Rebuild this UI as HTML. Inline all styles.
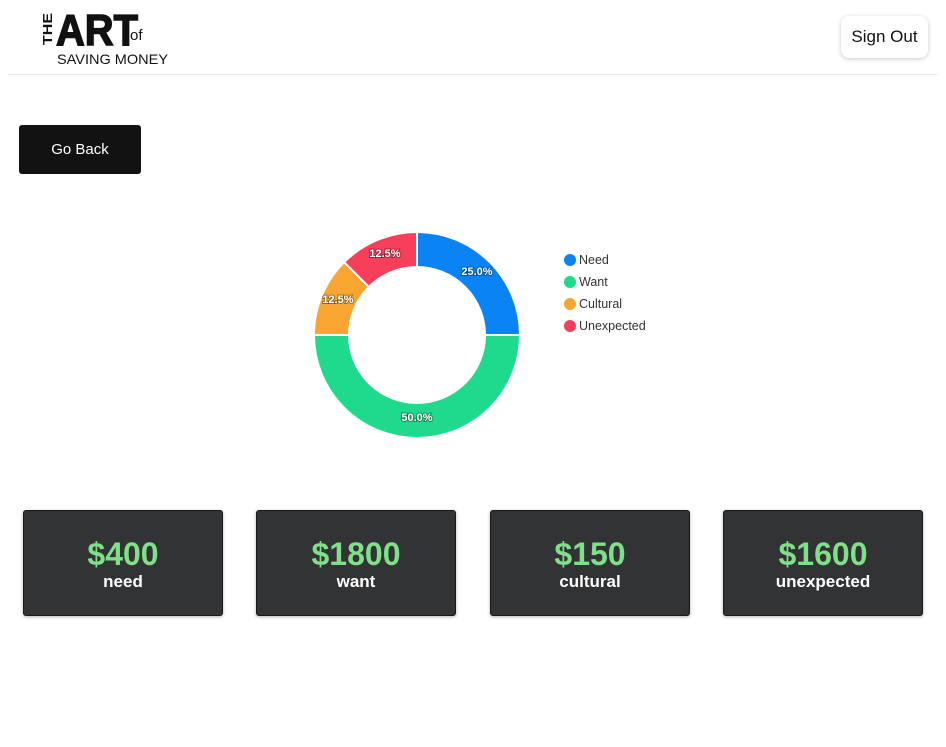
<!DOCTYPE html>
<html><head><meta charset="utf-8"><style>
*{margin:0;padding:0;box-sizing:border-box}
body{width:946px;height:747px;background:#fff;font-family:"Liberation Sans",Arial,sans-serif;position:relative;overflow:hidden}
.hdr{position:absolute;left:8px;top:74px;width:930px;height:1px;background:#eee}
.logo{position:absolute;left:0;top:0}
.so{position:absolute;left:841px;top:16px;width:87px;height:42px;border-radius:8px;background:#fff;box-shadow:0 1px 5px rgba(0,0,0,.22);font-size:17px;line-height:42px;text-align:center;color:#111}
.gb{position:absolute;left:19px;top:125px;width:122px;height:49px;border-radius:3px;background:#121212;color:#fff;font-size:15px;line-height:49px;text-align:center}
.card{position:absolute;top:510px;width:200px;height:106px;background:#323335;border:1px solid #1a1a1a;border-radius:3px;box-shadow:0 1px 3px rgba(0,0,0,.3);text-align:center;color:#fff;font-weight:bold}
.card .v{color:#7fe089;font-size:32px;margin-top:26px;line-height:34px}
.card .l{font-size:17px;line-height:20px;margin-top:1px}
.lg{position:absolute;left:564px;font-size:12.5px;color:#333}
.lg i{position:absolute;left:0;top:1px;width:12px;height:12px;border-radius:50%}
.lg span{margin-left:15px}
</style></head><body>
<svg class="logo" width="200" height="74" viewBox="0 0 200 74">
<text x="56" y="45" font-family="Liberation Sans" font-weight="bold" font-size="44" fill="#111" stroke="#111" stroke-width="1.5" textLength="82" lengthAdjust="spacingAndGlyphs">ART</text>
<text x="0" y="0" font-family="Liberation Sans" font-weight="bold" font-size="13" fill="#111" transform="translate(52 45) rotate(-90)" textLength="32" lengthAdjust="spacingAndGlyphs">THE</text>
<text x="130" y="40" font-family="Liberation Sans" font-size="15" fill="#111">of</text>
<text x="57" y="64" font-family="Liberation Sans" font-size="14" fill="#111" textLength="111" lengthAdjust="spacingAndGlyphs">SAVING MONEY</text>
</svg>
<div class="hdr"></div>
<div class="so">Sign Out</div>
<div class="gb">Go Back</div>
<svg style="position:absolute;left:0;top:0" width="946" height="747">
<g stroke="#fff" stroke-width="2">
<path d="M417 232 A103 103 0 0 1 520 335 L485 335 A68 68 0 0 0 417 267Z" fill="#0a84f5"/>
<path d="M520 335 A103 103 0 0 1 314 335 L349 335 A68 68 0 0 0 485 335Z" fill="#1fda8c"/>
<path d="M314 335 A103 103 0 0 1 344.2 262.2 L368.9 286.9 A68 68 0 0 0 349 335Z" fill="#f9a532"/>
<path d="M344.2 262.2 A103 103 0 0 1 417 232 L417 267 A68 68 0 0 0 368.9 286.9Z" fill="#f73e5a"/>
</g>
<g font-family="Liberation Sans" font-weight="bold" font-size="11" fill="#fff" text-anchor="middle" style="paint-order:stroke" stroke="rgba(0,0,0,.35)" stroke-width="2">
<text x="477" y="275">25.0%</text>
<text x="417" y="421">50.0%</text>
<text x="338" y="303">12.5%</text>
<text x="385" y="257">12.5%</text>
</g>
</svg>
<div class="lg" style="top:253px"><i style="background:#0a84f5"></i><span>Need</span></div>
<div class="lg" style="top:275px"><i style="background:#1fda8c"></i><span>Want</span></div>
<div class="lg" style="top:297px"><i style="background:#f9a532"></i><span>Cultural</span></div>
<div class="lg" style="top:319px"><i style="background:#f73e5a"></i><span>Unexpected</span></div>
<div class="card" style="left:23px"><div class="v">$400</div><div class="l">need</div></div>
<div class="card" style="left:256px"><div class="v">$1800</div><div class="l">want</div></div>
<div class="card" style="left:490px"><div class="v">$150</div><div class="l">cultural</div></div>
<div class="card" style="left:723px"><div class="v">$1600</div><div class="l">unexpected</div></div>
</body></html>
